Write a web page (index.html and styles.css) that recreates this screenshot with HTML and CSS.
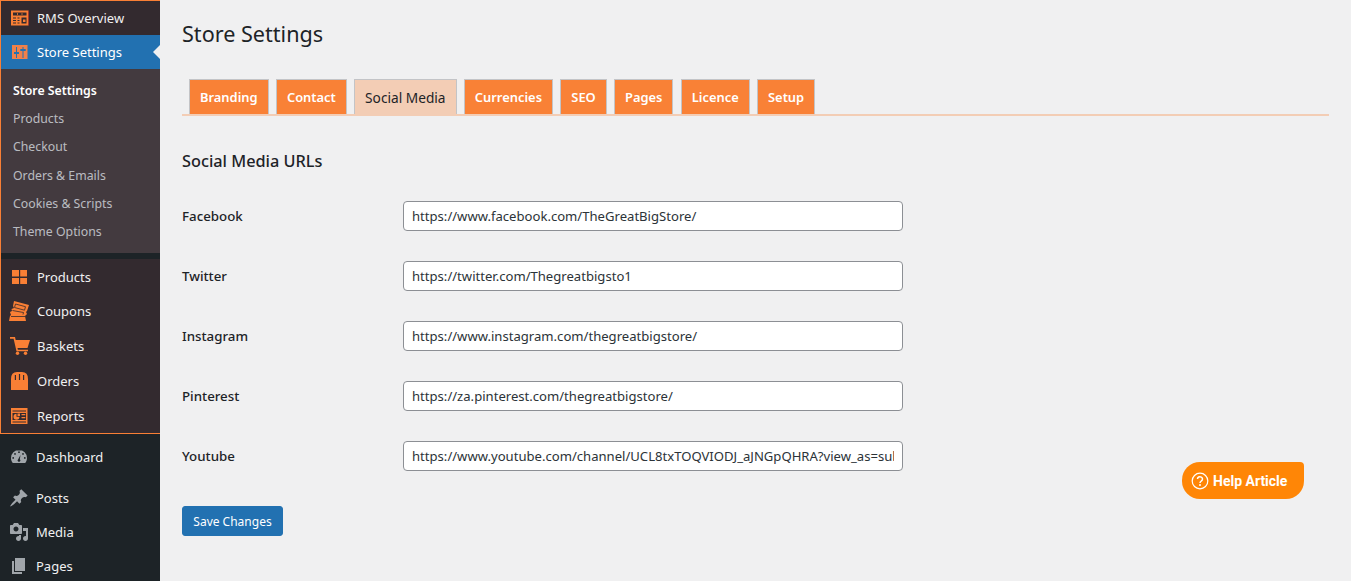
FILE: index.html
```html
<!DOCTYPE html>
<html lang="en">
<head>
    <meta charset="UTF-8">
    <meta name="viewport" content="width=device-width, initial-scale=1.0">
    <title>Store Settings</title>
    <link rel="stylesheet" href="styles.css">
</head>
<body>
    <div class="admin-menu">
        <div class="rms-group">
            <a class="menu-item rms-top">
                <svg class="menu-icon" viewBox="0 0 18 18"><path fill="#f97f35" fill-rule="evenodd" d="M0 1.500h17.500v15H0zM2 3.500v3h13.500v-3zM6 4.200h1v1.600H6zM10.500 4.200h1v1.600h-1zM2 8.500v1h3v-1zM6.500 8.500v1h2v-1zM2 11v1h3v-1zM2 13.500v1h3v-1zM6.500 11v1h2v-1zM6.500 13.500v1h2v-1zM10.500 8.500v6h5v-6zM12 10.500h2.500V13H12z"/><path fill="#b3212a" d="M17.500 1.500h.5v15h-.5z"/></svg>
                <span>RMS Overview</span>
            </a>
            <a class="menu-item menu-current">
                <svg class="menu-icon" viewBox="0 0 18 18"><rect x="1" y="2" width="15.500" height="14" fill="#f0814a"/><path fill="#2271b1" d="M5 4h1v5h2v2H6v4H5v-4H3V9h2zM11.500 4h1v2h2.200v2h-2.200v7h-1V8H9.300V6h2.200z"/></svg>
                <span>Store Settings</span>
            </a>
            <ul class="submenu">
                <li class="submenu-current">Store Settings</li>
                <li>Products</li>
                <li>Checkout</li>
                <li>Orders &amp; Emails</li>
                <li>Cookies &amp; Scripts</li>
                <li>Theme Options</li>
            </ul>
            <div class="menu-gap"></div>
            <a class="menu-item rms-item">
                <svg class="menu-icon" viewBox="0 0 18 18"><path fill="#f97f35" d="M1 2h7v6.500H1zM9.200 2H16v6.500H9.200zM1 10h7v6H1zM9.200 10H16v6H9.200z"/></svg>
                <span>Products</span>
            </a>
            <a class="menu-item rms-item">
                <svg class="menu-icon icon-coupon" viewBox="0 0 20 20"><path fill="#f97f35" d="M5 0l15 4-2 6-1 1 1 2-2 2 1 5H0l1-5 1-1-1-3 2-1-.5-2 2.500-1-1-2z"/><path fill="none" stroke="#332a2f" stroke-width=".8" d="M6.500 3l10 2.700-1 3.500-10-2.700zM3.500 9.500l11 2-.5 2M2 15.500h14"/></svg>
                <span>Coupons</span>
            </a>
            <a class="menu-item rms-item">
                <svg class="menu-icon icon-basket" viewBox="0 0 20 18"><path fill="#f97f35" d="M0 0h5l.7 3H20l-2.500 8H7.500l.4 1.700H18V14.300H6.500L3.600 1.700H0z"/><circle cx="7.500" cy="16.300" r="1.700" fill="#f97f35"/><circle cx="15.500" cy="16.300" r="1.700" fill="#f97f35"/></svg>
                <span>Baskets</span>
            </a>
            <a class="menu-item rms-item">
                <svg class="menu-icon" viewBox="0 0 18 18"><path fill="#f97f35" fill-rule="evenodd" d="M0 18V7Q0 0 6 0h5q6 0 6 7v11zM3.800 3v5h1.200V3zM7.900 2v6h1.200V2zM12 3v5h1.200V3z"/></svg>
                <span>Orders</span>
            </a>
            <a class="menu-item rms-item rms-last">
                <svg class="menu-icon" viewBox="0 0 18 18"><path fill="#f97f35" fill-rule="evenodd" d="M0 1h16.500v16H0zM1.500 3.500v1h13.500v-1zM1.500 6v7h13.500V6zM1.500 14.500v1h13.500v-1z"/><path fill="#f97f35" d="M5.500 6.800a3 3 0 1 0 3 3h-3zM6.500 6.500h2.500v2.500H6.500zM10.500 7h3.800v1.200h-3.800zM10.500 10h3.800v1.200h-3.800z"/></svg>
                <span>Reports</span>
            </a>
        </div>
        <a class="menu-item wp-item">
            <svg class="menu-icon icon-wp" viewBox="0 0 20 20"><path fill="#a0a5aa" fill-rule="evenodd" d="M10 3a8 8 0 0 0-8 8c0 1.900.7 3.600 1.800 5h12.400c1.100-1.400 1.800-3.100 1.800-5a8 8 0 0 0-8-8zM10 4.300a.9.9 0 1 1 0 1.800.9.9 0 0 1 0-1.800zM6 6a.9.9 0 1 1 0 1.800.9.9 0 0 1 0-1.800zM14 6a.9.9 0 1 1 0 1.800.9.9 0 0 1 0-1.800zM4.200 10a.9.9 0 1 1 0 1.800.9.9 0 0 1 0-1.800zM15.800 10a.9.9 0 1 1 0 1.800.9.9 0 0 1 0-1.800zM11.500 8l-.7 4.200a1.400 1.400 0 1 1-1.600 0z"/></svg>
            <span>Dashboard</span>
        </a>
        <div class="menu-sep"></div>
        <a class="menu-item wp-item">
            <svg class="menu-icon icon-wp" viewBox="0 0 20 20"><path fill="#a0a5aa" d="M10.440 3.020l1.820-1.820 6.360 6.350-1.830 1.820c-1.050-.68-2.480-.57-3.410.36l-.75.75c-.92.930-1.040 2.350-.35 3.410l-1.830 1.820-2.410-2.410-2.800 2.790c-.42.420-3.380 2.710-3.800 2.290s1.860-3.390 2.280-3.810l2.790-2.790L4.100 9.360l1.830-1.820c1.050.69 2.480.57 3.400-.36l.75-.75c.93-.92 1.050-2.350.36-3.410z"/></svg>
            <span>Posts</span>
        </a>
        <a class="menu-item wp-item">
            <svg class="menu-icon icon-wp" viewBox="0 0 20 20"><path fill="#a0a5aa" d="M13 11V4c0-.55-.45-1-1-1h-1.670L9 1H5L3.670 3H2c-.55 0-1 .45-1 1v7c0 .55.45 1 1 1h10c.55 0 1-.45 1-1zM7 4.500c1.380 0 2.500 1.120 2.500 2.500S8.380 9.500 7 9.500 4.500 8.380 4.500 7 5.620 4.500 7 4.500zM14 6h5v10.500c0 1.380-1.120 2.500-2.500 2.500S14 17.880 14 16.500s1.120-2.500 2.500-2.500c.17 0 .34.020.5.050V9h-3V6zm-4 8.050V13h2v3.500c0 1.380-1.120 2.500-2.500 2.500S7 17.880 7 16.500 8.120 14 9.500 14c.17 0 .34.020.5.050z"/></svg>
            <span>Media</span>
        </a>
        <a class="menu-item wp-item">
            <svg class="menu-icon icon-wp" viewBox="0 0 20 20"><path fill="#a0a5aa" d="M6 15V2h10v13H6zm-1 1h8v2H3V5h2v11z"/></svg>
            <span>Pages</span>
        </a>
    </div>

    <div class="content">
        <h1>Store Settings</h1>
        <div class="tabs">
            <a class="tab">Branding</a>
            <a class="tab">Contact</a>
            <a class="tab tab-active">Social Media</a>
            <a class="tab">Currencies</a>
            <a class="tab">SEO</a>
            <a class="tab">Pages</a>
            <a class="tab">Licence</a>
            <a class="tab">Setup</a>
        </div>
        <h2>Social Media URLs</h2>
        <div class="form-row">
            <label>Facebook</label>
            <input class="url-input" type="text" value="https://www.facebook.com/TheGreatBigStore/">
        </div>
        <div class="form-row">
            <label>Twitter</label>
            <input class="url-input" type="text" value="https://twitter.com/Thegreatbigsto1">
        </div>
        <div class="form-row">
            <label>Instagram</label>
            <input class="url-input" type="text" value="https://www.instagram.com/thegreatbigstore/">
        </div>
        <div class="form-row">
            <label>Pinterest</label>
            <input class="url-input" type="text" value="https://za.pinterest.com/thegreatbigstore/">
        </div>
        <div class="form-row">
            <label>Youtube</label>
            <input class="url-input" type="text" value="https://www.youtube.com/channel/UCL8txTOQVIODJ_aJNGpQHRA?view_as=subscriber">
        </div>
        <button class="save-button">Save Changes</button>
    </div>

    <a class="help-article">
        <svg class="help-icon" viewBox="0 0 18 18"><circle cx="9" cy="9" r="7.800" fill="none" stroke="#fff" stroke-width="1.200"/><path fill="none" stroke="#fff" stroke-width="1.500" d="M6.500 7a2.500 2.300 0 1 1 3.800 2c-.9.600-1.300 1-1.300 2"/><circle cx="9" cy="13" r="1" fill="#fff"/></svg>
        Help Article
    </a>
</body>
</html>
```

FILE: styles.css
```css
html, body {
    height: 100%;
}
body {
    margin: 0;
    display: flex;
    height: 581px;
    overflow: hidden;
    background: #f0f0f1;
    color: #1d2327;
    font-family: "Noto Sans", sans-serif;
    font-size: 13px;
}
.admin-menu {
    width: 160px;
    flex-shrink: 0;
    background: #1d2327;
    overflow: hidden;
}
.rms-group {
    background: #332a2f;
    border: 1px solid #f97f35;
    border-right: none;
    margin-bottom: 6px;
}
.menu-item {
    display: flex;
    align-items: center;
    gap: 8px;
    height: 34px;
    padding-left: 10px;
    color: #f0f0f1;
    font-size: 13px;
    position: relative;
}
.menu-icon {
    width: 18px;
    height: 18px;
    flex-shrink: 0;
}
.icon-coupon {
    width: 20px;
    height: 20px;
    margin-left: -2px;
}
.icon-basket {
    width: 20px;
    margin-left: -1px;
    margin-right: -1px;
}
.icon-wp {
    width: 20px;
    height: 20px;
    margin-left: -1px;
    margin-right: -1px;
}
.menu-current {
    background: #2271b1;
    color: #fff;
}
.menu-current::after {
    content: "";
    position: absolute;
    right: 0;
    top: 10px;
    border: 7px solid transparent;
    border-left: none;
    border-right-color: #f0f0f1;
}
.submenu {
    list-style: none;
    margin: 0;
    padding: 8px 0 7px 12px;
    background: #433a3f;
    color: rgba(240, 246, 252, 0.7);
}
.submenu li {
    height: 28.200px;
    line-height: 28.200px;
    font-size: 12.300px;
}
.submenu-current {
    color: #fff;
    font-weight: 600;
}
.menu-gap {
    height: 6px;
    background: #1d2327;
}
.rms-item {
    height: 34.800px;
}
.wp-item {
    padding-left: 10px;
}
.menu-sep {
    height: 7px;
}
.content {
    flex: 1;
    padding: 0 22px;
}
h1 {
    margin: 0;
    padding-top: 19px;
    font-size: 21.600px;
    font-weight: 400;
    line-height: 30px;
}
.tabs {
    display: flex;
    gap: 7.300px;
    margin-top: 30px;
    padding-left: 7px;
    border-bottom: 2px solid #f3cdb5;
    height: 35px;
}
.tab {
    height: 35px;
    box-sizing: border-box;
    padding: 0 10px;
    background: #f98136;
    border: 1px solid #c3c4c7;
    border-bottom: none;
    color: #fff;
    font-weight: 600;
    font-size: 12.900px;
    line-height: 35px;
}
.tab-active {
    background: #f3cdb5;
    color: #1d2327;
    font-weight: 400;
    font-size: 13.700px;
}
h2 {
    margin: 34px 0 0;
    font-size: 16.300px;
    font-weight: 500;
    line-height: 22px;
}
.form-row {
    display: flex;
    align-items: center;
    height: 30px;
    margin-top: 30px;
}
h2 + .form-row {
    margin-top: 29px;
}
.form-row label {
    width: 221px;
    font-weight: 500;
    font-size: 13.300px;
}
.url-input {
    width: 500px;
    height: 30px;
    box-sizing: border-box;
    padding: 0 8px;
    background: #fff;
    border: 1px solid #8c8f94;
    border-radius: 4px;
    color: #2c3338;
    font-family: inherit;
    font-size: 13.100px;
}
.save-button {
    display: block;
    margin-top: 35px;
    width: 101px;
    height: 30px;
    padding: 0;
    background: #2271b1;
    border: 1px solid #2271b1;
    border-radius: 3px;
    color: #fff;
    font-family: inherit;
    font-size: 12px;
}
.help-article {
    position: absolute;
    left: 1182px;
    top: 462px;
    width: 122px;
    height: 37px;
    box-sizing: border-box;
    display: flex;
    align-items: center;
    gap: 4px;
    padding-left: 9px;
    background: #ff8606;
    border-radius: 18px 4px 18px 18px;
    color: #fff;
    font-family: "Roboto", sans-serif;
    font-weight: 700;
    font-size: 14px;
}
.help-icon {
    width: 18px;
    height: 18px;
}
```
